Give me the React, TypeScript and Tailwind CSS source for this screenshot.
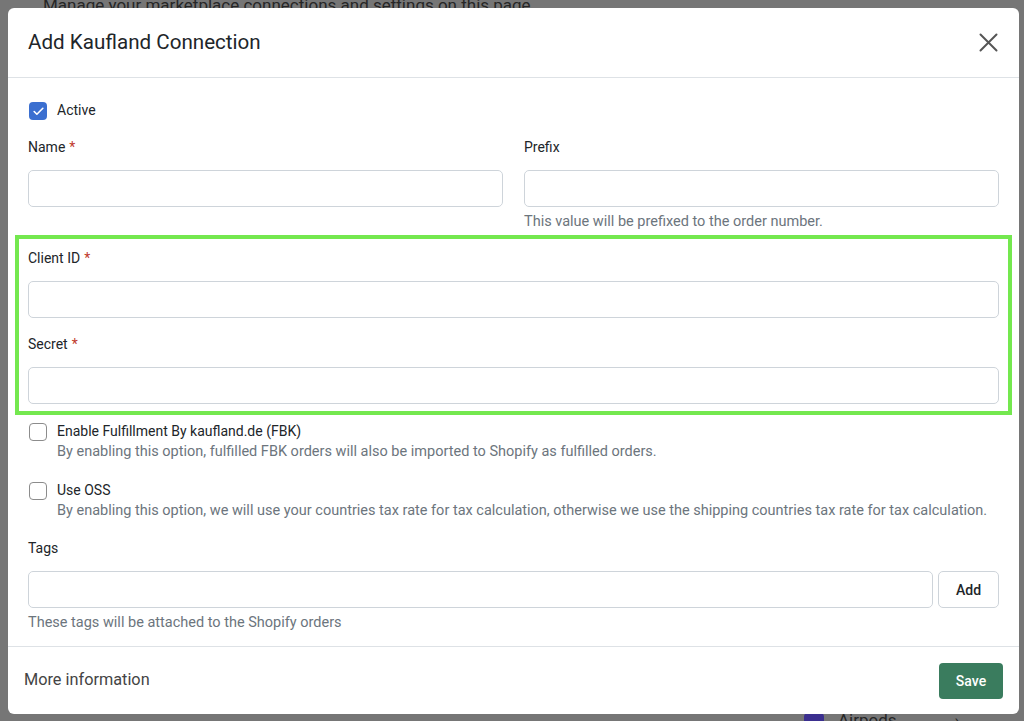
import { Check } from 'lucide-react';

const Label = ({ text, required }: { text: string; required?: boolean }) => (
  <label className="mb-3 block text-sm leading-[21px] text-[#212529]">
    {text}
    {required && <span className="ml-1 text-[#c0392b]">*</span>}
  </label>
);

const Input = ({ className = '' }: { className?: string }) => (
  <input
    type="text"
    className={`block h-[37px] w-full rounded-[5px] border border-[#ced4da] bg-white px-3 text-sm outline-none ${className}`}
  />
);

const CheckRow = ({
  checked,
  label,
  description,
}: {
  checked?: boolean;
  label: string;
  description?: string;
}) => (
  <div className="flex items-start gap-[10px]">
    <span
      className={`mt-[2px] ml-px flex h-[18px] w-[18px] shrink-0 items-center justify-center rounded-[4px] ${
        checked ? 'bg-[#3b6fd0]' : 'border-[1.5px] border-[#8c8c8c] bg-white'
      }`}
    >
      {checked && <Check size={13} strokeWidth={3} className="text-white" />}
    </span>
    <div>
      <div className="text-sm leading-[21px] text-[#212529]">{label}</div>
      {description && (
        <div className="text-[14.5px] leading-[20px] text-[#6c757d]">{description}</div>
      )}
    </div>
  </div>
);

export default function App() {
  return (
    <div className="relative h-[721px] w-[1024px] overflow-hidden bg-[#767676] font-['Roboto',sans-serif]">
      {/* page behind the backdrop */}
      <div className="absolute left-[43px] top-[-7px] text-[17px] text-[#262626]">
        Manage your marketplace connections and settings on this page
      </div>
      <div className="absolute left-[804px] top-[708px] flex items-center gap-[14px] text-[17px] text-[#262626]">
        <span className="h-[16px] w-[20px] rounded-sm bg-[#3b2f8f]" />
        <span>Airpods</span>
        <span className="ml-[44px] text-[#262626]">›</span>
      </div>

      {/* modal */}
      <div className="absolute left-2 top-2 flex h-[706px] w-[1011px] flex-col overflow-hidden rounded-md bg-white">
        <div className="flex h-[70px] shrink-0 items-center justify-between border-b border-[#dee2e6] pl-5 pr-[21px]">
          <h2 className="text-[20.6px] font-normal text-[#212529]">Add Kaufland Connection</h2>
          <svg width="19" height="19" viewBox="0 0 19 19" className="text-[#555]">
            <path d="M1.5 1.5 L17.5 17.5 M17.5 1.5 L1.5 17.5" stroke="currentColor" strokeWidth="2" strokeLinecap="round" />
          </svg>
        </div>

        <div className="flex-1 px-5 pt-[22px]">
          <CheckRow checked label="Active" />

          <div className="mt-4 grid grid-cols-2 gap-x-[21px]">
            <div>
              <Label text="Name" required />
              <Input />
            </div>
            <div>
              <Label text="Prefix" />
              <Input />
              <div className="mt-[5px] text-[14.5px] leading-[20px] text-[#6c757d]">
                This value will be prefixed to the order number.
              </div>
            </div>
          </div>

          <div className="relative mt-[16px]">
            <div className="pointer-events-none absolute -inset-x-[13px] -top-[13px] -bottom-[11px] border-4 border-[#74e84f]" />
            <Label text="Client ID" required />
            <Input />
            <div className="mt-4">
              <Label text="Secret" required />
              <Input />
            </div>
          </div>

          <div className="mt-[17px]">
            <CheckRow
              label="Enable Fulfillment By kaufland.de (FBK)"
              description="By enabling this option, fulfilled FBK orders will also be imported to Shopify as fulfilled orders."
            />
          </div>
          <div className="mt-[18px]">
            <CheckRow
              label="Use OSS"
              description="By enabling this option, we will use your countries tax rate for tax calculation, otherwise we use the shipping countries tax rate for tax calculation."
            />
          </div>

          <div className="mt-[17px]">
            <Label text="Tags" />
            <div className="flex gap-[5px]">
              <Input />
              <button className="h-[37px] w-[61px] shrink-0 rounded-[5px] border border-[#ced4da] bg-white text-sm font-medium text-[#212529]">
                Add
              </button>
            </div>
            <div className="mt-[5px] text-[14.5px] leading-[20px] text-[#6c757d]">
              These tags will be attached to the Shopify orders
            </div>
          </div>
        </div>

        <div className="flex h-[68px] shrink-0 items-center justify-between border-t border-[#dee2e6] pl-4 pr-4">
          <span className="text-[16.3px] text-[#444]">More information</span>
          <button className="h-[36px] w-[64px] rounded-[4px] bg-[#3a7c5e] text-sm font-medium text-white">
            Save
          </button>
        </div>
      </div>
    </div>
  );
}
